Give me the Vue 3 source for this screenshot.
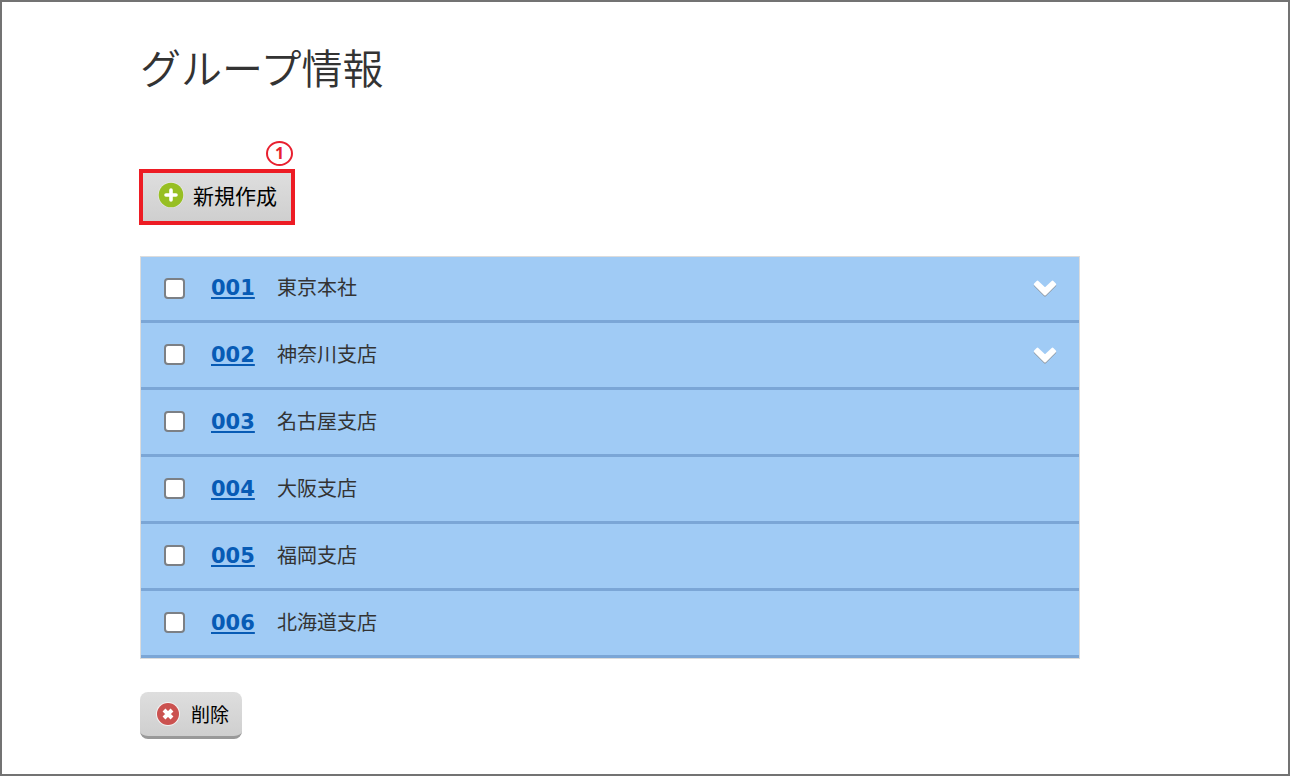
<script setup>
import { ref } from 'vue'

const groups = ref([
  { code: '001', name: '東京本社', expandable: true, checked: false },
  { code: '002', name: '神奈川支店', expandable: true, checked: false },
  { code: '003', name: '名古屋支店', expandable: false, checked: false },
  { code: '004', name: '大阪支店', expandable: false, checked: false },
  { code: '005', name: '福岡支店', expandable: false, checked: false },
  { code: '006', name: '北海道支店', expandable: false, checked: false },
])
</script>

<template>
  <main class="page">
    <h1 class="title">グループ情報</h1>

    <div class="create">
      <button type="button" class="button button-create">
        <svg class="icon-add" viewBox="0 0 26 26" aria-hidden="true">
          <circle cx="13" cy="13" r="13" fill="#fff" opacity="0.4" />
          <circle cx="13" cy="13" r="12.3" fill="#97bf23" />
          <path d="M13 8v10M8 13h10" stroke="#fff" stroke-width="3.6" stroke-linecap="round" />
        </svg>
        <span>新規作成</span>
      </button>
      <span class="callout">1</span>
    </div>

    <ul class="groups">
      <li v-for="group in groups" :key="group.code" class="group">
        <input v-model="group.checked" type="checkbox" class="check" :aria-label="group.name" />
        <a href="#" class="code">{{ group.code }}</a>
        <span class="name">{{ group.name }}</span>
        <button v-if="group.expandable" type="button" class="expand" :aria-label="group.name">
          <svg viewBox="0 0 26 20" aria-hidden="true">
            <path d="M3 7.5L5.5 5L13 12L20.5 5L23 7.5L13 17.5Z" fill="#8d959d" stroke="#8d959d" stroke-width="2.4" stroke-linejoin="round" />
            <path d="M3 6.3L5.5 3.8L13 10.8L20.5 3.8L23 6.3L13 16.3Z" fill="#fff" stroke="#fff" stroke-width="2.4" stroke-linejoin="round" />
          </svg>
        </button>
      </li>
    </ul>

    <button type="button" class="button button-delete">
      <svg class="icon-delete" viewBox="0 0 24 24" aria-hidden="true">
        <circle cx="12" cy="12" r="12" fill="#fff" opacity="0.7" />
        <circle cx="12" cy="12" r="11" fill="#cb5250" />
        <path d="M8 8l8 8M16 8l-8 8" stroke="#fff" stroke-width="4" />
      </svg>
      <span>削除</span>
    </button>
  </main>
</template>

<style>
body {
  background: #fff;
}
</style>

<style scoped>
.page {
  box-sizing: border-box;
  min-height: 100vh;
  padding: 34px 208px 32px 138px;
  border: 2px solid #737373;
  color: #333;
  font-family: "Noto Sans CJK JP", sans-serif;
}

.title {
  margin: 0;
  font-size: 41px;
  font-weight: 350;
  line-height: 60px;
}

.create {
  position: relative;
  width: fit-content;
  margin: 73px 0 31px -1px;
}

.button {
  display: flex;
  align-items: center;
  box-sizing: border-box;
  color: #000;
  background: linear-gradient(#dedede, #cfcfcf);
  font-family: inherit;
  cursor: pointer;
}

.button-create {
  height: 56px;
  padding: 0 14px 4px 15px;
  gap: 9px;
  border: 4px solid #ed1c24;
  font-size: 21px;
  line-height: 28px;
}

.icon-add {
  width: 26px;
  height: 26px;
}

.callout {
  position: absolute;
  right: 2px;
  bottom: 59px;
  box-sizing: border-box;
  width: 27px;
  height: 25px;
  border: 2px solid #e8202f;
  border-radius: 50%;
  color: #e8202f;
  font-family: "Noto Sans", sans-serif;
  font-size: 16px;
  font-weight: 700;
  line-height: 20px;
  text-align: center;
}

.groups {
  margin: 0;
  padding: 0;
  border: 1px solid #dcdcdc;
  list-style: none;
}

.group {
  display: flex;
  align-items: center;
  box-sizing: border-box;
  height: 67px;
  padding: 0 21px 1px 23px;
  border-bottom: 3px solid #7ba6d6;
  background: #a0cbf5;
}

.group:first-child {
  height: 66px;
}

.check {
  appearance: none;
  box-sizing: border-box;
  width: 21px;
  height: 21px;
  margin: 0 26px 0 0;
  border: 2px solid #7c8085;
  border-radius: 4px;
  background: #fff;
}

.check:checked {
  background: #075bb5;
}

.code {
  width: 66px;
  color: #075bb5;
  font-family: "DejaVu Sans", sans-serif;
  font-size: 21px;
  font-weight: 700;
  line-height: 30px;
  text-decoration-thickness: 2px;
  text-underline-offset: 2px;
}

.name {
  padding-bottom: 2px;
  font-size: 20px;
  line-height: 30px;
}

.expand {
  width: 26px;
  height: 20px;
  margin-left: auto;
  padding: 0;
  border: 0;
  background: none;
  cursor: pointer;
}

.expand svg {
  display: block;
}

.button-delete {
  height: 47px;
  margin-top: 33px;
  padding: 0 13px 0 16px;
  gap: 11px;
  border: 0;
  border-bottom: 3px solid #999;
  border-radius: 8px;
  font-size: 19px;
  line-height: 28px;
}

.icon-delete {
  width: 24px;
  height: 24px;
}
</style>
